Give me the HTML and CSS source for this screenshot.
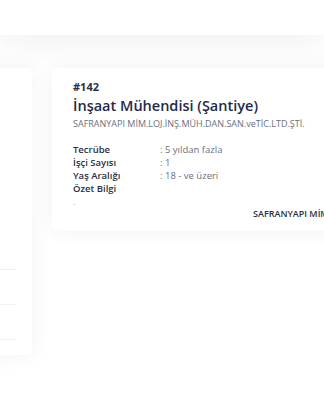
FILE: index.html
```html
<!DOCTYPE html>
<html lang="tr">
<head>
    <meta charset="UTF-8">
    <meta name="viewport" content="width=device-width, initial-scale=1.0">
    <title>İş İlanları</title>
    <link rel="stylesheet" href="styles.css">
</head>
<body>

    <header class="topbar"></header>

    <main class="content">
        <aside class="side-card">
            <div class="side-list">
                <div class="side-item"></div>
                <div class="side-item"></div>
                <div class="side-item"></div>
            </div>
        </aside>

        <section class="job-card">
            <div class="job-no">#142</div>
            <h2 class="job-title">İnşaat Mühendisi (Şantiye)</h2>
            <div class="job-company">SAFRANYAPI MİM.LOJ.İNŞ.MÜH.DAN.SAN.veTİC.LTD.ŞTİ.</div>

            <div class="job-info">
                <div class="info-label">Tecrübe</div>
                <div class="info-value">: 5 yıldan fazla</div>
                <div class="info-label">İşçi Sayısı</div>
                <div class="info-value">: 1</div>
                <div class="info-label">Yaş Aralığı</div>
                <div class="info-value">: 18 - ve üzeri</div>
                <div class="info-label">Özet Bilgi</div>
                <div class="info-value"></div>
            </div>
            <div class="job-summary">.</div>

            <div class="job-footer">SAFRANYAPI MİM.LOJ.</div>
        </section>
    </main>

</body>
</html>
```

FILE: styles.css
```css
:root {
    --bg-color: #ffffff;
    --title-color: #1f2a4a;
    --text-color: #3f4254;
    --muted-color: #6b6f80;
    --line-color: #eef0f6;
}
body {
    font-family: "Open Sans", Arial, sans-serif;
    background-color: var(--bg-color);
    color: var(--text-color);
    margin: 0;
    overflow: hidden;
    height: 400px;
}
.topbar {
    height: 35px;
    background: #fff;
    box-shadow: 0 10px 30px rgba(82, 63, 105, 0.07);
    position: relative;
    z-index: 1;
}
.content {
    display: flex;
    align-items: flex-start;
    gap: 20px;
    margin-top: 33px;
    margin-left: -168px;
}
.side-card {
    flex: 0 0 200px;
    height: 287px;
    background: #fff;
    border-radius: 6px;
    box-shadow: 0 0 20px rgba(82, 63, 105, 0.07);
    box-sizing: border-box;
    padding-top: 167px;
}
.side-list {
    margin-right: 16px;
}
.side-item {
    height: 34px;
    border-bottom: 1px solid var(--line-color);
}
.job-card {
    flex: 0 0 420px;
    background: #fff;
    border-radius: 6px;
    box-shadow: 0 0 20px rgba(82, 63, 105, 0.07);
    padding: 12px 21px 10px;
    box-sizing: border-box;
}
.job-no {
    font-size: 11px;
    font-weight: 700;
    color: #2b2f3f;
    line-height: 14px;
}
.job-title {
    margin: 2px 0 0;
    font-size: 14.5px;
    font-weight: 600;
    color: var(--title-color);
    line-height: 20px;
}
.job-company {
    margin-top: 2px;
    font-size: 9px;
    color: var(--muted-color);
    line-height: 12px;
}
.job-info {
    margin-top: 13px;
    display: grid;
    grid-template-columns: 87px 1fr;
    font-size: 9.5px;
    line-height: 13px;
}
.info-label {
    font-weight: 600;
    color: #2b2f3f;
}
.info-value {
    color: var(--muted-color);
}
.job-summary {
    font-size: 9.5px;
    line-height: 13px;
    color: #b0b3c0;
}
.job-footer {
    margin-top: 0;
    padding-left: 180px;
    font-size: 9px;
    font-weight: 600;
    color: #2b2f3f;
    white-space: nowrap;
    line-height: 12px;
}
```
